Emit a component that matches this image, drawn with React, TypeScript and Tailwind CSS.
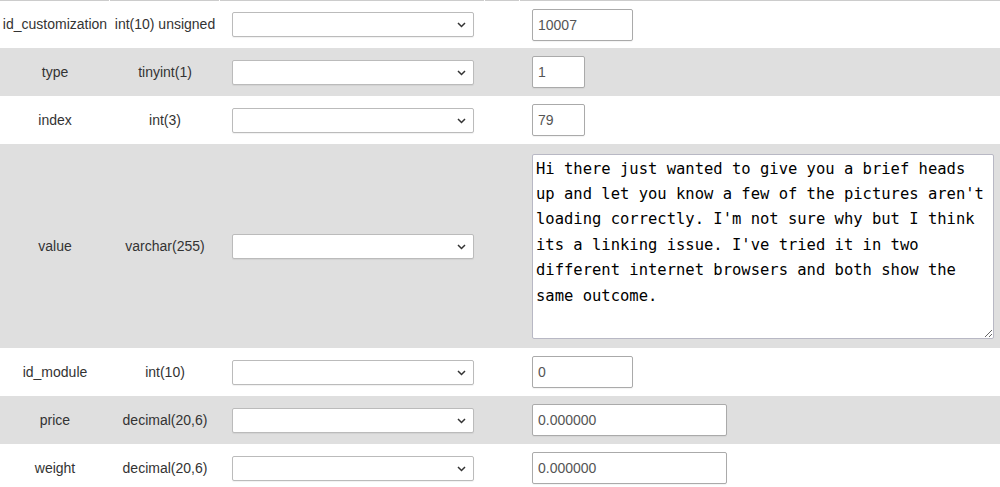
const rows = [
  { name: 'id_customization', type: 'int(10) unsigned', value: '10007', w: 'w-[101px]', h: 'h-[47px]', gray: false },
  { name: 'type', type: 'tinyint(1)', value: '1', w: 'w-[53px]', h: 'h-12', gray: true },
  { name: 'index', type: 'int(3)', value: '79', w: 'w-[53px]', h: 'h-12', gray: false },
  { name: 'value', type: 'varchar(255)', value: null, w: '', h: 'h-[204px]', gray: true },
  { name: 'id_module', type: 'int(10)', value: '0', w: 'w-[101px]', h: 'h-12', gray: false },
  { name: 'price', type: 'decimal(20,6)', value: '0.000000', w: 'w-[195px]', h: 'h-12', gray: true },
  { name: 'weight', type: 'decimal(20,6)', value: '0.000000', w: 'w-[195px]', h: 'h-12', gray: false },
]

const message =
  "Hi there just wanted to give you a brief heads up and let you know a few of the pictures aren't loading correctly. I'm not sure why but I think its a linking issue. I've tried it in two different internet browsers and both show the same outcome."

function FunctionSelect() {
  return (
    <div className="relative w-[242px] h-[25px]">
      <select className="appearance-none w-full h-full bg-white border border-[#bbb] rounded-[2px] shadow-[0_1px_1px_rgba(0,0,0,0.06)] outline-none">
        <option></option>
      </select>
      <svg
        className="absolute right-[8px] top-[10px] pointer-events-none"
        width="9"
        height="6"
        viewBox="0 0 9 6"
        fill="none"
      >
        <path d="M1 1L4.5 4.5L8 1" stroke="#333" strokeWidth="1.5" />
      </svg>
    </div>
  )
}

export default function App() {
  return (
    <div className="w-[1000px] bg-white font-['Liberation_Sans',Arial,sans-serif] text-[14px] text-[#333]">
      <div className="flex h-px">
        <div className="w-[110px] bg-[#ccc] border-r border-white"></div>
        <div className="w-[110px] bg-[#ccc] border-r border-white"></div>
        <div className="w-[265px] bg-[#ccc] border-r border-white"></div>
        <div className="w-[35px] bg-[#ccc] border-r border-white"></div>
        <div className="flex-1 bg-[#ccc]"></div>
      </div>

      {rows.map((r) => (
        <div key={r.name} className={`flex items-center ${r.h} ${r.gray ? 'bg-[#dfdfdf]' : 'bg-white'}`}>
          <div className="w-[110px] text-center whitespace-nowrap">{r.name}</div>
          <div className="w-[110px] text-center whitespace-nowrap">{r.type}</div>
          <div className="w-[265px] pl-3">
            <FunctionSelect />
          </div>
          <div className="w-[35px]"></div>
          <div className="flex-1 pl-3">
            {r.value === null ? (
              <textarea
                className="block w-[462px] h-[185px] bg-white border border-[#b8b8c4] rounded-[2px] px-[3px] pt-[2px] font-['DejaVu_Sans_Mono',monospace] text-[15.5px] leading-[25.4px] text-black outline-none"
                defaultValue={message}
              />
            ) : (
              <input
                className={`${r.w} h-8 bg-white border border-[#aaa] rounded-[2px] px-[5px] text-[14px] text-[#555] outline-none shadow-[0_1px_1px_rgba(0,0,0,0.05)]`}
                defaultValue={r.value}
              />
            )}
          </div>
        </div>
      ))}
    </div>
  )
}
